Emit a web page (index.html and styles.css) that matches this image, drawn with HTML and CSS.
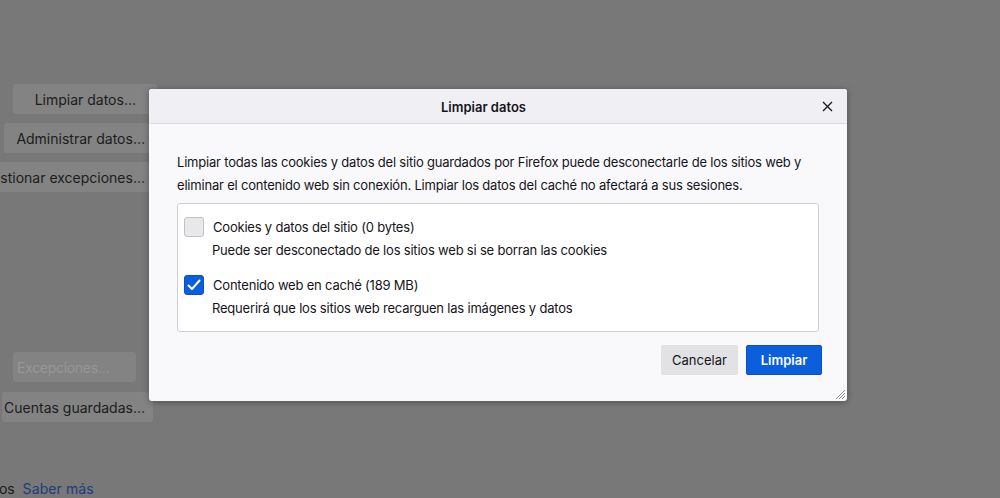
FILE: index.html
```html
<!DOCTYPE html>
<html lang="es">
<head>
<meta charset="utf-8">
<title>Limpiar datos</title>
<link rel="stylesheet" href="styles.css">
</head>
<body>
<div class="page">
  <div class="group group-top">
    <button class="bg-btn bg-btn-clear">Limpiar datos…</button>
    <button class="bg-btn">Administrar datos…</button>
    <button class="bg-btn">Gestionar excepciones…</button>
  </div>
  <div class="group group-bottom">
    <button class="bg-btn bg-btn-ex" disabled>Excepciones…</button>
    <button class="bg-btn bg-btn-acc">Cuentas guardadas…</button>
  </div>
  <p class="footer-line"><span class="cut">datos</span> <a class="link">Saber más</a></p>
</div>

<div class="dialog">
  <div class="dialog-header">
    <div class="dialog-title">Limpiar datos</div>
    <button class="close" aria-label="Cerrar">
      <svg width="11" height="11" viewBox="0 0 11 11"><path d="M1 1L10 10M10 1L1 10" stroke="#1c1b22" stroke-width="1.4" fill="none"/></svg>
    </button>
  </div>
  <div class="dialog-body">
    <p class="desc">Limpiar todas las cookies y datos del sitio guardados por Firefox puede desconectarle de los sitios web y eliminar el contenido web sin conexión. Limpiar los datos del caché no afectará a sus sesiones.</p>
    <div class="options">
      <div class="option">
        <span class="check"></span>
        <div class="option-text">
          <div class="option-label">Cookies y datos del sitio (0 bytes)</div>
          <div class="option-sub">Puede ser desconectado de los sitios web si se borran las cookies</div>
        </div>
      </div>
      <div class="option option-2">
        <span class="check checked">
          <svg width="14" height="12" viewBox="0 0 14 12"><path d="M1.5 6.5L5 10L12.5 1.5" stroke="#fff" stroke-width="2" fill="none" stroke-linecap="round" stroke-linejoin="round"/></svg>
        </span>
        <div class="option-text">
          <div class="option-label">Contenido web en caché (189 MB)</div>
          <div class="option-sub">Requerirá que los sitios web recarguen las imágenes y datos</div>
        </div>
      </div>
    </div>
    <div class="actions">
      <button class="btn btn-cancel">Cancelar</button>
      <button class="btn btn-primary">Limpiar</button>
    </div>
  </div>
  <svg class="grip" width="12" height="12" viewBox="0 0 12 12"><path d="M11 2L2 11M11 5L5 11M11 8L8 11" stroke="#8f8f93" stroke-width="1" fill="none"/></svg>
</div>
</body>
</html>
```

FILE: styles.css
```css
* { box-sizing: border-box; }
html, body {
  margin: 0;
  padding: 0;
  height: 498px;
  overflow: hidden;
}
body {
  background: #787878;
  font-family: Inter, "Noto Sans", "Liberation Sans", sans-serif;
  color: #1a1a1a;
}
.page {
  position: relative;
  height: 498px;
}
.group {
  width: 157px;
  display: flex;
  flex-direction: column;
  align-items: flex-end;
  gap: 9px;
}
.group-top {
  padding-top: 84px;
}
.group-bottom {
  padding-top: 160px;
  gap: 10px;
}
.bg-btn {
  height: 30px;
  border: none;
  border-radius: 3px;
  background: #838383;
  color: #1c1c1c;
  font-family: inherit;
  font-size: 14px;
  padding: 0 12px;
  white-space: nowrap;
  flex-shrink: 0;
}
.bg-btn-clear {
  padding: 0 21px 0 22px;
}
.bg-btn-ex {
  margin-right: 21px;
  width: 123px;
  padding: 0 0 0 4px;
  text-align: left;
  color: #979797;
  letter-spacing: -0.3px;
}
.bg-btn-acc {
  margin-right: 4px;
  padding: 0 8px 0 2px;
}
.footer-line {
  margin: 58px 0 0 -22px;
  font-size: 14px;
  color: #1c1c1c;
  white-space: nowrap;
}
.footer-line .link {
  color: #1e3c80;
  margin-left: 4px;
  letter-spacing: 0.1px;
}

.dialog {
  position: absolute;
  left: 149px;
  top: 89px;
  width: 698px;
  height: 312px;
  background: #f9f9fb;
  border-radius: 3px;
  box-shadow: 0 1px 6px rgba(0,0,0,0.35);
  overflow: hidden;
}
.dialog-header {
  height: 35px;
  background: #f0f0f4;
  border-bottom: 1px solid #dcdce0;
  display: flex;
  align-items: center;
  padding-right: 10px;
}
.dialog-title {
  flex: 1;
  text-align: center;
  font-size: 13px;
  font-weight: 600;
  color: #15141a;
  padding-top: 1px;
}
.close {
  width: 18px;
  height: 18px;
  border: none;
  background: none;
  padding: 0;
  display: flex;
  align-items: center;
  justify-content: center;
  margin-right: 1px;
}
.dialog-body {
  padding: 27px 25px 0 28px;
  letter-spacing: -0.2px;
}
.desc {
  margin: 0;
  font-size: 13px;
  line-height: 23px;
  color: #15141a;
  width: 640px;
}
.options {
  margin-top: 6px;
  width: 642px;
  height: 129px;
  background: #fff;
  border: 1px solid #cfcfd3;
  border-radius: 3px;
  padding: 13px 0 0 6px;
}
.option {
  display: flex;
  align-items: flex-start;
  gap: 9px;
}
.option-2 {
  margin-top: 16px;
}
.check {
  width: 20px;
  height: 20px;
  border: 1px solid #c2c2c6;
  border-radius: 3px;
  background: #e8e8ea;
  flex-shrink: 0;
  display: flex;
  align-items: center;
  justify-content: center;
}
.check.checked {
  background: #0b5fdc;
  border-color: #0950c4;
}
.option-text {
  font-size: 13px;
  color: #15141a;
  padding-top: 1px;
}
.option-label {
  line-height: 18px;
}
.option-sub {
  margin-top: 5px;
  margin-left: -1px;
  line-height: 18px;
}
.actions {
  display: flex;
  justify-content: flex-end;
  gap: 8px;
  margin-top: 13px;
}
.btn {
  height: 30px;
  border: none;
  border-radius: 2px;
  font-family: inherit;
  font-size: 13px;
  padding: 0 10px;
  letter-spacing: 0;
}
.btn-cancel {
  background: #e2e2e4;
  color: #15141a;
  width: 77px;
}
.btn-primary {
  background: #0b5fdc;
  color: #fff;
  font-weight: 600;
  width: 76px;
  border: 1px solid #0a4fbd;
}
.grip {
  position: absolute;
  right: 1px;
  bottom: 1px;
}
```
